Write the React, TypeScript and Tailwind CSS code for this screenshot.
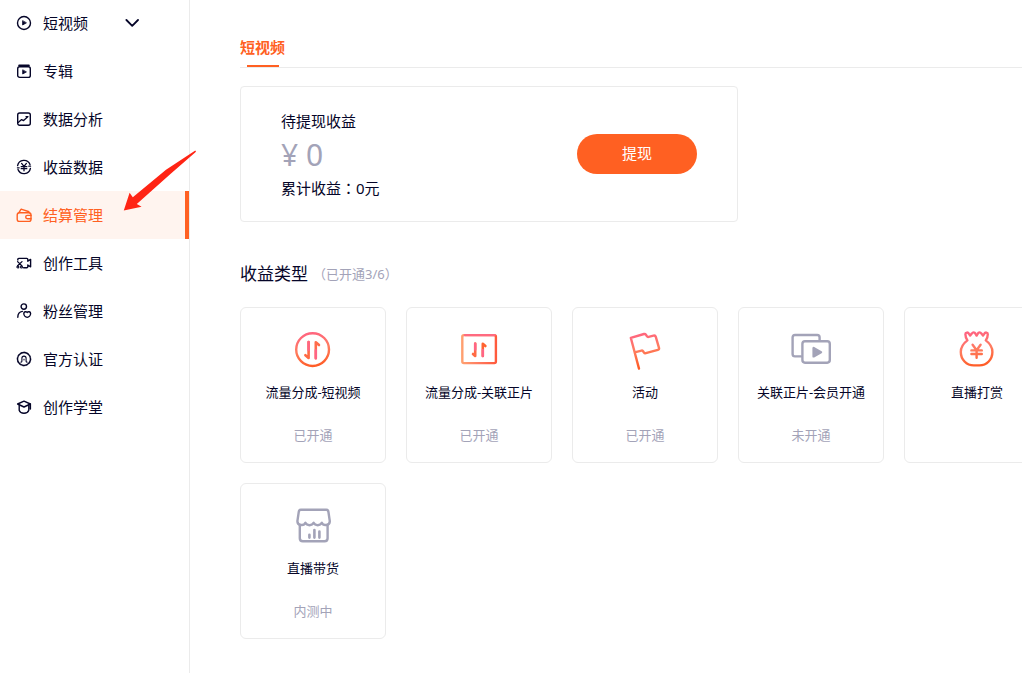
import type { ReactNode } from 'react';

type NavItem = { label: string; icon: ReactNode; active?: boolean; expandable?: boolean };
type EarningType = { title: string; status?: string; icon: ReactNode };

function SmallIcon({ children }: { children: ReactNode }) {
  return (
    <svg
      viewBox="0 0 16 16"
      className="size-4 shrink-0"
      fill="none"
      stroke="currentColor"
      strokeWidth="1.4"
      strokeLinecap="round"
      strokeLinejoin="round"
      aria-hidden="true"
    >
      {children}
    </svg>
  );
}

function LargeIcon({ children, color }: { children: ReactNode; color: string }) {
  return (
    <svg
      viewBox="0 0 40 40"
      className="size-10 overflow-visible"
      fill="none"
      stroke={color}
      strokeWidth="2.4"
      strokeLinecap="round"
      strokeLinejoin="round"
      aria-hidden="true"
    >
      <defs>
        <linearGradient id="warm" gradientUnits="userSpaceOnUse" x1="16" y1="3" x2="22" y2="37">
          <stop offset="0" stopColor="#ff6381" />
          <stop offset="0.5" stopColor="#ff7d60" />
          <stop offset="1" stopColor="#ff5c26" />
        </linearGradient>
        <linearGradient id="warmSide" gradientUnits="userSpaceOnUse" x1="3" y1="20" x2="37" y2="20">
          <stop offset="0" stopColor="#ffa070" />
          <stop offset="0.5" stopColor="#ff7a5e" />
          <stop offset="1" stopColor="#ff5a3c" />
        </linearGradient>
      </defs>
      {children}
    </svg>
  );
}

const GREY = '#a3a3b8';

const navItems: NavItem[] = [
  {
    label: '短视频',
    expandable: true,
    icon: (
      <SmallIcon>
        <circle cx="8" cy="8" r="6.5" />
        <path d="M6.6 6v4l3.5-2z" fill="currentColor" strokeWidth="0.8" />
      </SmallIcon>
    ),
  },
  {
    label: '专辑',
    icon: (
      <SmallIcon>
        <rect x="1.7" y="3.8" width="12.6" height="10.6" rx="2" />
        <path d="M3.2 2.5h9.6" strokeWidth="2" />
        <path d="M6.7 7.2v3.8l3.4-1.9z" fill="currentColor" strokeWidth="0.8" />
      </SmallIcon>
    ),
  },
  {
    label: '数据分析',
    icon: (
      <SmallIcon>
        <rect x="1.7" y="2" width="12.6" height="12.3" rx="2" />
        <path d="M2.2 11.4 5.6 8.6l2 1 4.2-3.8M10 5.6h2" strokeWidth="1.3" />
      </SmallIcon>
    ),
  },
  {
    label: '收益数据',
    icon: (
      <SmallIcon>
        <path d="M1.6 6.6A6.5 6.5 0 0 1 14 5.4M14.4 9.4A6.5 6.5 0 0 1 2 10.6" />
        <path d="M14.6 7.200H12.800M1.400 8.800h1.800" strokeWidth="1.2" />
        <path d="m5.6 4.4 2.4 3 2.400-3M8 7.4v4.4M5.2 7.7h5.6M5.2 9.7h5.6" strokeWidth="1.3" />
      </SmallIcon>
    ),
  },
  {
    label: '结算管理',
    active: true,
    icon: (
      <SmallIcon>
        <rect x="1.2" y="5.8" width="13.8" height="8.600" rx="2.200" />
        <path d="M3 5.600 4.600 2.800q.4-.7 1.200-.5l6.600 2.200q.8.3.8 1" />
        <path d="M15 8.4h-3.600a1.700 1.700 0 0 0 0 3.400H15" />
      </SmallIcon>
    ),
  },
  {
    label: '创作工具',
    icon: (
      <SmallIcon>
        <path d="M1.8 5V4.400q0-1 1-1h8q1 0 1 1v1.800l2.800-1.800v7.400L11.800 10v1.800q0 1-1 1H7.600" />
        <path d="M1.600 6.600 5.800 10.800M1.600 10.800 6 6.600" strokeWidth="1.3" />
        <circle cx="1.900" cy="12" r="1" strokeWidth="1.100" />
        <circle cx="5.500" cy="12" r="1" strokeWidth="1.100" />
      </SmallIcon>
    ),
  },
  {
    label: '粉丝管理',
    icon: (
      <SmallIcon>
        <circle cx="7.8" cy="3.6" r="2.7" />
        <path d="M1.8 14.2C1.8 10.8 3.6 8.8 6.4 8.4" />
        <path d="M11.2 9.4c1-1.2 3.4-.9 3.4 1.2 0 1.8-1.6 3.6-3.4 3.8-1.8-.2-3.4-2-3.4-3.8 0-2.1 2.4-2.4 3.4-1.2z" />
      </SmallIcon>
    ),
  },
  {
    label: '官方认证',
    icon: (
      <SmallIcon>
        <circle cx="8" cy="8" r="6.5" />
        <circle cx="8" cy="8" r="6.9" strokeWidth="0.6" strokeDasharray="1.4 2.2" />
        <path d="M4.9 11.1q1 .2 1-1V7.2a2.1 2.1 0 0 1 4.2 0v2.9q0 1.2 1 1" strokeWidth="1.1" />
        <path d="M8 8.2v.8" strokeWidth="1" />
      </SmallIcon>
    ),
  },
  {
    label: '创作学堂',
    icon: (
      <SmallIcon>
        <path d="M8 2.2 14.4 5 8 8 1.6 5z" />
        <path d="M3.2 6.4v4.8c.6 1.8 2.6 3 4.8 3s4.2-1.2 4.8-3V6.4M14.4 5.2V10" />
      </SmallIcon>
    ),
  },
];

const earningTypes: EarningType[] = [
  {
    title: '流量分成-短视频',
    status: '已开通',
    icon: (
      <LargeIcon color="url(#warm)">
        <circle cx="19.6" cy="20.6" r="16.4" />
        <path d="M15.6 13v16l-3.2-2.8" stroke="#ff6a44" strokeWidth="2.6" />
        <path d="M22.8 29.2V13.2l3.2 2.8" stroke="#ff6d4c" strokeWidth="2.6" />
        <path d="M15.6 13v8M22.8 29.2v-8" stroke="#ff6486" strokeWidth="2.4" />
      </LargeIcon>
    ),
  },
  {
    title: '流量分成-关联正片',
    status: '已开通',
    icon: (
      <LargeIcon color="url(#warmSide)">
        <rect x="3.3" y="6.1" width="33.6" height="28" rx="1.6" />
        <path d="M6 6.1h29.4" stroke="#ff6a80" />
        <path d="M16.2 14.6v12.4l-2.2-2" stroke="#ff6a44" strokeWidth="2.6" />
        <path d="M23.8 27V14.8l2.6 2.2" stroke="#ff6330" strokeWidth="2.6" />
        <path d="M16.2 14.6v6M23.8 27v-6" stroke="#ff6486" strokeWidth="2.4" />
      </LargeIcon>
    ),
  },
  {
    title: '活动',
    status: '已开通',
    icon: (
      <LargeIcon color="url(#warm)">
        <path d="M14 39.600 5.800 8.800 19 5q1.200-.3 1.900.7L22 7.400q.6.8 1.600.5l4.900-1.300q1.800-.4 2.300 1.300l3.200 10.900q.5 1.700-1.200 2.100l-12 3.300q-1.200.3-1.800-.6l-1.100-1.600q-.5-.6-1.400-.4l-6 1.500" />
      </LargeIcon>
    ),
  },
  {
    title: '关联正片-会员开通',
    status: '未开通',
    icon: (
      <LargeIcon color={GREY}>
        <path d="M10 27.400H4q-2.400 0-2.400-2.400V8.400Q1.600 6 4 6h22.200q2.400 0 2.400 2.400V11" />
        <rect x="11.400" y="12.300" width="27.400" height="21.400" rx="2.600" />
        <path d="M22.600 19v8.400L30 23.200z" fill={GREY} />
      </LargeIcon>
    ),
  },
  {
    title: '直播打赏',
    icon: (
      <LargeIcon color="url(#warm)">
        <path d="M10.400 11.400C9.200 9.600 8.400 7.600 8.400 5.200c0-2 2.600-2.200 3.600-.4l1.200 1.800 1.600-2c1-1.600 2.800-1.600 3.600 0l1.200 2 1.200-2c.8-1.600 2.600-1.600 3.600 0l1.600 2 1.200-1.800c1-1.800 3.600-1.600 3.600.4 0 2.400-.8 4.400-2 6.200 4 3 6.600 6.800 6.600 11.600 0 7.400-5.600 13.400-13 13.400h-5.600c-7.400 0-13-6-13-13.400 0-4.800 2.600-8.600 6.600-11.600z" />
        <path d="m15.600 15.800 4 5.400 4-5.400M19.600 21.200v7.600M14.400 21.400h10.400M14.400 25h10.400" />
      </LargeIcon>
    ),
  },
  {
    title: '直播带货',
    status: '内测中',
    icon: (
      <LargeIcon color={GREY}>
        <path d="M8 4.800h25.200q1.900 0 2.200 1.900l1.400 9.500c0 4.600-6.600 5-8 1.600-1.600 3.200-6.600 3.200-8.200 0-1.600 3.200-6.600 3.200-8.200 0-1.400 3.400-8 3-8-1.600l1.400-9.500q.3-1.900 2.200-1.900z" />
        <path d="M6.800 20v13.200q0 3 3 3h21.800q3 0 3-3V20" />
        <path d="M16.400 29.800v2.800M21.400 25v7.600M26.400 26.600v6" strokeWidth="2.600" />
      </LargeIcon>
    ),
  },
];

function Sidebar() {
  return (
    <aside className="relative w-[190px] shrink-0 border-r border-[#ebebeb]">
      <nav className="-mt-px">
        <ul>
          {navItems.map((item) => (
            <li key={item.label}>
              <a
                href="#"
                aria-current={item.active ? 'page' : undefined}
                className={
                  item.active
                    ? 'flex h-12 items-center border-r-4 border-[#ff6022] bg-[#fff4ef] pl-4 text-[#ff6022]'
                    : 'flex h-12 items-center pl-4'
                }
              >
                {item.icon}
                <span className="ml-[11px]">{item.label}</span>
                {item.expandable && (
                  <svg
                    viewBox="0 0 14 8"
                    className="ml-[37px] h-2 w-3.5"
                    fill="none"
                    stroke="currentColor"
                    strokeWidth="1.8"
                    strokeLinecap="round"
                    strokeLinejoin="round"
                    aria-hidden="true"
                  >
                    <path d="M1.400 1 7.200 6.800 13 1" />
                  </svg>
                )}
              </a>
            </li>
          ))}
        </ul>
      </nav>
      <svg
        viewBox="0 0 74 62"
        className="pointer-events-none absolute top-[150px] left-[123px] h-[62px] w-[74px]"
        fill="#ff2414"
        aria-hidden="true"
      >
        <path d="M.8 60.600 6.600 42.800 9.800 47.200 43 19.800 72.300.600 73 1.700 48 23.600 13.800 54 18.600 56.800z" />
      </svg>
    </aside>
  );
}

function BalancePanel() {
  return (
    <section className="mt-[18px] flex w-[498px] items-center justify-between rounded border border-[#ebebeb] px-10 py-[22px]">
      <div>
        <p className="leading-6">待提现收益</p>
        <p className="text-[30px] leading-[44px] text-[#a3a3b8]">¥ 0</p>
        <p className="leading-[21px]">
          累计收益<span className="font-['Noto_Sans_CJK_TC',sans-serif]">：</span>0元
        </p>
      </div>
      <button type="button" className="h-10 w-[120px] rounded-full bg-[#ff6022] pb-0.5 text-white">
        提现
      </button>
    </section>
  );
}

function EarningCard({ item }: { item: EarningType }) {
  return (
    <li className="flex h-[156px] flex-col items-center rounded-md border border-[#ebebeb] pt-[21px] text-[13px] leading-5 whitespace-nowrap">
      {item.icon}
      <h3 className="mt-[13px]">{item.title}</h3>
      {item.status && <p className="mt-[23px] text-[#a3a3b8]">{item.status}</p>}
    </li>
  );
}

export default function App() {
  return (
    <div className="flex min-h-screen overflow-hidden bg-white font-['Noto_Sans','Noto_Sans_CJK_SC',sans-serif] text-[15px] text-[#050528]">
      <Sidebar />
      <main className="min-w-0 flex-1 pl-[50px]">
        <div className="flex border-b border-[#ebebeb] pt-9">
          <a href="#" className="font-bold leading-[22px] text-[#ff6022]">
            短视频
            <span className="mx-auto mt-[7px] block h-0.5 w-8 bg-[#ff6022]" />
          </a>
        </div>
        <BalancePanel />
        <div className="mt-10 flex items-center leading-6">
          <h2 className="text-[17px]">收益类型</h2>
          <span className="ml-[5px] text-[13px] text-[#a3a3b8]">（已开通3/6）</span>
        </div>
        <ul className="mt-[21px] grid grid-cols-[repeat(5,146px)] gap-5">
          {earningTypes.map((item) => (
            <EarningCard key={item.title} item={item} />
          ))}
        </ul>
      </main>
    </div>
  );
}
